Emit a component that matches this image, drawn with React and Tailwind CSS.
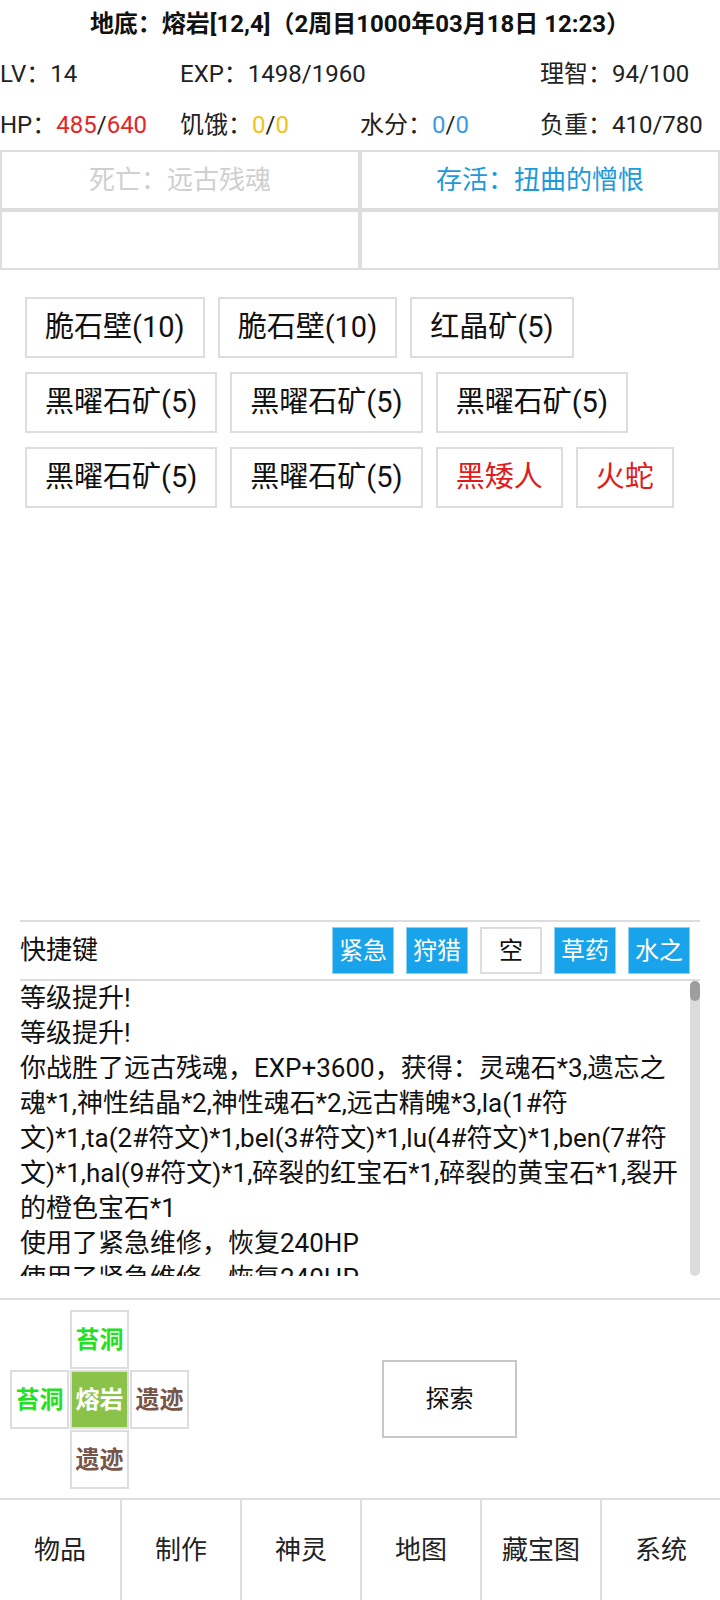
const stats1 = [
  { label: 'LV：', value: [{ t: '14' }] },
  { label: 'EXP：', value: [{ t: '1498/1960' }] },
  null,
  { label: '理智：', value: [{ t: '94/100' }] },
];

const stats2 = [
  { label: 'HP：', value: [{ t: '485', c: 'text-[#e22626]' }, { t: '/' }, { t: '640', c: 'text-[#e22626]' }] },
  { label: '饥饿：', value: [{ t: '0', c: 'text-[#f1c21b]' }, { t: '/' }, { t: '0', c: 'text-[#f1c21b]' }] },
  { label: '水分：', value: [{ t: '0', c: 'text-[#3d9be2]' }, { t: '/' }, { t: '0', c: 'text-[#3d9be2]' }] },
  { label: '负重：', value: [{ t: '410/780' }] },
];

const items = [
  { name: '脆石壁(10)' },
  { name: '脆石壁(10)' },
  { name: '红晶矿(5)' },
  { name: '黑曜石矿(5)' },
  { name: '黑曜石矿(5)' },
  { name: '黑曜石矿(5)' },
  { name: '黑曜石矿(5)' },
  { name: '黑曜石矿(5)' },
  { name: '黑矮人', enemy: true },
  { name: '火蛇', enemy: true },
];

const shortcuts = [
  { name: '紧急', on: true },
  { name: '狩猎', on: true },
  { name: '空', on: false },
  { name: '草药', on: true },
  { name: '水之', on: true },
];

const logs = [
  '等级提升!',
  '等级提升!',
  '你战胜了远古残魂，EXP+3600，获得：灵魂石*3,遗忘之魂*1,神性结晶*2,神性魂石*2,远古精魄*3,la(1#符文)*1,ta(2#符文)*1,bel(3#符文)*1,lu(4#符文)*1,ben(7#符文)*1,hal(9#符文)*1,碎裂的红宝石*1,碎裂的黄宝石*1,裂开的橙色宝石*1',
  '使用了紧急维修，恢复240HP',
  '使用了紧急维修，恢复240HP',
];

const tabs = ['物品', '制作', '神灵', '地图', '藏宝图', '系统'];

const StatRow = ({ cells }) => (
  <div className="grid h-[51px] grid-cols-4 items-center text-[24px] text-[#222]">
    {cells.map((cell, i) => (
      <div key={i} className="whitespace-nowrap">
        {cell && (
          <>
            {cell.label}
            {cell.value.map((v, j) => (
              <span key={j} className={v.c}>{v.t}</span>
            ))}
          </>
        )}
      </div>
    ))}
  </div>
);

const MapCell = ({ name, color, active }) => (
  <div
    className={`flex h-[59px] w-[59px] items-center justify-center border-2 border-[#ddd] text-[24px] font-bold ${
      active ? 'bg-[#8bc34a] text-white' : 'bg-white'
    } ${color || ''}`}
  >
    {name}
  </div>
);

export default function App() {
  return (
    <div className="flex h-[1600px] w-[720px] flex-col overflow-hidden bg-white font-[Roboto,'Noto_Sans_CJK_SC',sans-serif] text-[#222]">
      {/* header */}
      <div className="flex h-[48px] items-center justify-center text-[24px] font-bold text-[#111]">
        地底：熔岩[12,4]（2周目1000年03月18日 12:23）
      </div>
      <StatRow cells={stats1} />
      <StatRow cells={stats2} />

      {/* battle result */}
      <div className="grid grid-cols-2 text-[26px]">
        <div className="flex h-[60px] items-center justify-center border-2 border-[#ddd] text-[#cfcfcf]">死亡：远古残魂</div>
        <div className="flex h-[60px] items-center justify-center border-2 border-[#ddd] text-[#1e9ad9]">存活：扭曲的憎恨</div>
        <div className="h-[60px] border-2 border-[#ddd]"></div>
        <div className="h-[60px] border-2 border-[#ddd]"></div>
      </div>

      {/* scene items */}
      <div className="flex flex-wrap gap-x-[13px] gap-y-[14px] px-[25px] pt-[27px]">
        {items.map((item, i) => (
          <div
            key={i}
            className={`flex h-[61px] items-center border-2 border-[#ddd] px-[18px] text-[29px] ${
              item.enemy ? 'text-[#e01b1b]' : 'text-[#111]'
            }`}
          >
            {item.name}
          </div>
        ))}
      </div>

      <div className="flex-1"></div>

      {/* shortcuts */}
      <div className="mx-[20px] flex h-[61px] items-center justify-between border-y-2 border-[#ddd] pr-[10px]">
        <span className="text-[26px] text-[#111]">快捷键</span>
        <div className="flex gap-[12px]">
          {shortcuts.map((s, i) => (
            <div
              key={i}
              className={`flex h-[47px] w-[62px] items-center justify-center text-[24px] ${
                s.on ? 'border border-[#8fd0f2] bg-[#18a3ea] text-white' : 'border-2 border-[#ddd] bg-white text-[#111]'
              }`}
            >
              {s.name}
            </div>
          ))}
        </div>
      </div>

      {/* log */}
      <div className="relative mx-[20px] h-[295px] overflow-hidden">
        <div className="pr-[12px] text-[26px] leading-[35px] text-[#111]">
          {logs.map((line, i) => (
            <div key={i}>{line}</div>
          ))}
        </div>
        <div className="absolute right-0 top-0 h-full w-[10px] rounded-full bg-[#dcdcdc]">
          <div className="h-[20px] w-[10px] rounded-full bg-[#9e9e9e]"></div>
        </div>
      </div>

      <div className="h-[22px]"></div>

      {/* map + explore */}
      <div className="flex h-[200px] items-start border-t-2 border-[#ddd]">
        <div className="ml-[10px] mt-[10px] grid grid-cols-[59px_59px_59px] gap-[1px]">
          <div></div>
          <MapCell name="苔洞" color="text-[#22e022]" />
          <div></div>
          <MapCell name="苔洞" color="text-[#22e022]" />
          <MapCell name="熔岩" active />
          <MapCell name="遗迹" color="text-[#795548]" />
          <div></div>
          <MapCell name="遗迹" color="text-[#795548]" />
          <div></div>
        </div>
        <div className="mr-[10px] flex h-full flex-1 items-center justify-center">
          <div className="flex h-[78px] w-[135px] items-center justify-center border-2 border-[#c8c8c8] text-[24px] text-[#111]">
            探索
          </div>
        </div>
      </div>

      {/* bottom nav */}
      <div className="grid h-[102px] grid-cols-6 border-t-2 border-[#ddd]">
        {tabs.map((t, i) => (
          <div
            key={t}
            className={`flex items-center justify-center text-[26px] text-[#222] ${i > 0 ? 'border-l-2 border-[#ddd]' : ''}`}
          >
            {t}
          </div>
        ))}
      </div>
    </div>
  );
}
